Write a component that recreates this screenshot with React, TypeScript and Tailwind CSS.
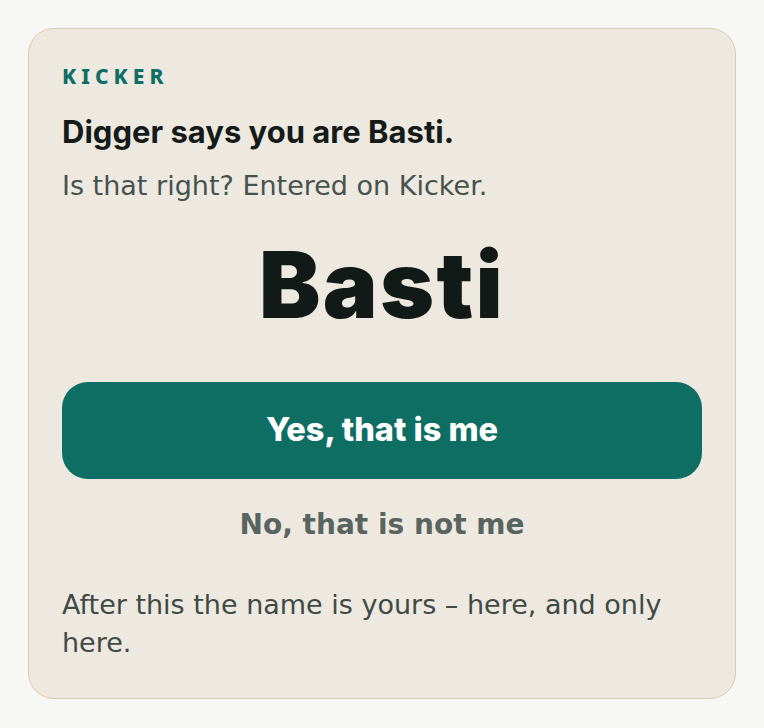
import React from 'react';

const display = "font-['Inter','Roboto',sans-serif]";
const body = "font-['DejaVu_Sans','Noto_Sans',sans-serif]";

const App: React.FC = () => {
  return (
    <div className="min-h-screen bg-[#f7f7f6] p-[28px]">
      <div className="rounded-[26px] border-[1.5px] border-[#dccbb0] bg-[#ede8e0] px-[33px] pt-[33px] pb-[36px]">
        {/* Kicker */}
        <div className="font-['Noto_Sans',sans-serif] text-[21px] font-extrabold uppercase leading-[28px] tracking-[0.24em] text-[#0e6e64]">
          Kicker
        </div>

        <h2 className={`${display} mt-[22px] text-[31px] font-bold leading-[40px] tracking-[0em] text-[#141b18]`}>
          Digger says you are Basti.
        </h2>
        <p className={`${body} mt-[15px] text-[27px] leading-[38px] text-[#46524d]`}>
          Is that right? Entered on Kicker.
        </p>

        {/* Name */}
        <div className={`${display} mt-[25px] text-center text-[92px] font-black leading-[110px] tracking-[0.025em] text-[#121a17]`}>
          Basti
        </div>

        {/* Actions */}
        <button className={`${display} mt-[42px] flex h-[97px] w-full items-center justify-center rounded-[26px] bg-[#0e6e64] text-[32.5px] font-extrabold text-white`}>
          Yes, that is me
        </button>
        <button className={`${body} mt-[22px] block w-full text-center text-[28px] font-bold leading-[48px] text-[#58645f]`}>
          No, that is not me
        </button>

        <p className={`${body} mt-[37px] text-[27px] leading-[38px] text-[#3f4a45]`}>
          After this the name is yours – here, and only here.
        </p>
      </div>
    </div>
  );
};

export default App;
